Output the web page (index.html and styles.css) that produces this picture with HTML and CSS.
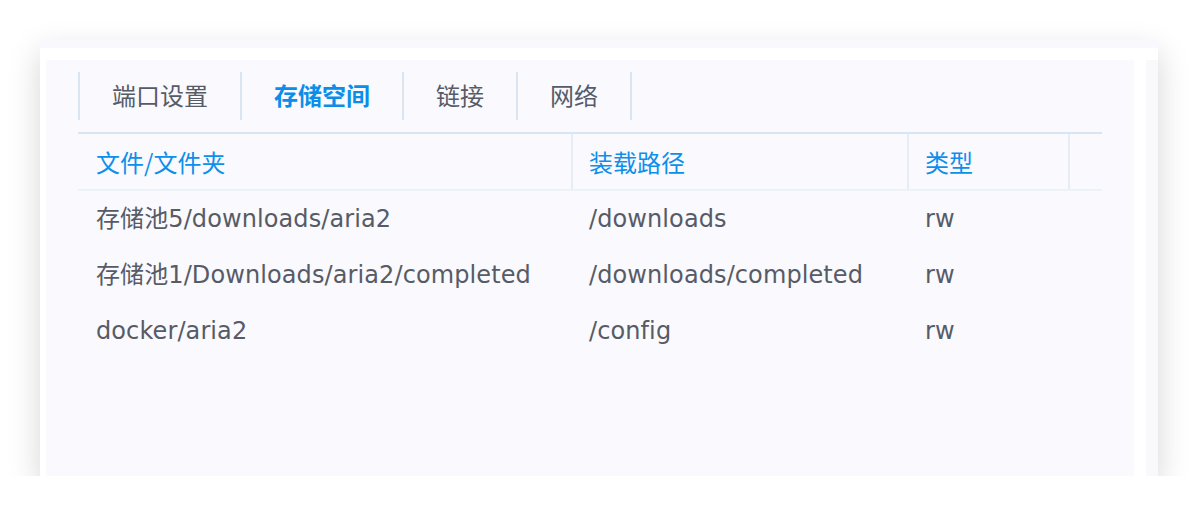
FILE: index.html
```html
<!DOCTYPE html>
<html lang="zh-CN">
<head>
<meta charset="utf-8">
<title>存储空间</title>
<link rel="stylesheet" href="styles.css">
</head>
<body>
<div class="card">
  <div class="topstrip"></div>
  <div class="body">
    <div class="leftgap"></div>
    <div class="main">
      <div class="tabs">
        <div class="tab">端口设置</div>
        <div class="tab active">存储空间</div>
        <div class="tab">链接</div>
        <div class="tab last">网络</div>
      </div>
      <div class="table">
        <div class="row head">
          <div class="cell c1">文件/文件夹</div>
          <div class="cell c2">装载路径</div>
          <div class="cell c3">类型</div>
          <div class="cell c4"></div>
        </div>
        <div class="row">
          <div class="cell c1">存储池5/downloads/aria2</div>
          <div class="cell c2">/downloads</div>
          <div class="cell c3">rw</div>
          <div class="cell c4"></div>
        </div>
        <div class="row">
          <div class="cell c1">存储池1/Downloads/aria2/completed</div>
          <div class="cell c2">/downloads/completed</div>
          <div class="cell c3">rw</div>
          <div class="cell c4"></div>
        </div>
        <div class="row">
          <div class="cell c1">docker/aria2</div>
          <div class="cell c2">/config</div>
          <div class="cell c3">rw</div>
          <div class="cell c4"></div>
        </div>
      </div>
    </div>
    <div class="rightgap"></div>
    <div class="scroll"></div>
  </div>
</div>
</body>
</html>
```
FILE: styles.css
```css
html, body {
  margin: 0;
  padding: 0;
  background: #ffffff;
}
body {
  padding: 40px 0 0 40px;
  font-family: "DejaVu Sans", "Noto Sans CJK SC", sans-serif;
  color: #575b66;
}
.card {
  width: 1118px;
  height: 436px;
  background: #ffffff;
  box-shadow: 0 12px 30px rgba(0, 0, 0, 0.17);
  display: flex;
  flex-direction: column;
}
.topstrip {
  height: 8px;
  background: #f9f9fd;
  margin-bottom: 12px;
}
.body {
  flex: 1;
  display: flex;
}
.leftgap {
  width: 6px;
}
.main {
  width: 1088px;
  background: #f9f9fe;
  padding: 12px 32px 0 32px;
  box-sizing: border-box;
}
.rightgap {
  width: 12px;
}
.scroll {
  width: 12px;
  background: #f9f9fd;
}
.tabs {
  display: flex;
  height: 48px;
  margin-bottom: 12px;
}
.tab {
  border-left: 2px solid #dbe5f1;
  padding: 0 32px;
  font-size: 24px;
  line-height: 46px;
  color: #575b66;
  font-family: "Noto Sans CJK SC", sans-serif;
}
.tab.last {
  border-right: 2px solid #dbe5f1;
}
.tab.active {
  color: #0b8ee8;
  font-weight: bold;
}
.table {
  border-top: 2px solid #dae5f2;
  width: 1024px;
}
.row {
  display: grid;
  grid-template-columns: 495px 336px 161px 32px;
  height: 56px;
  align-items: center;
}
.row.head {
  height: 55px;
  border-bottom: 2px solid #edf1f8;
  align-items: stretch;
}
.cell {
  font-size: 24px;
  line-height: 28px;
  letter-spacing: 0.1px;
  padding-left: 16px;
  white-space: nowrap;
  display: flex;
  align-items: center;
}
.cell.c1 {
  padding-left: 18px;
}
.head .cell {
  color: #0d8fea;
  letter-spacing: 0;
  font-family: "Noto Sans CJK SC", sans-serif;
}
.head .c1, .head .c2, .head .c3 {
  border-right: 2px solid #e5edf8;
}
```
